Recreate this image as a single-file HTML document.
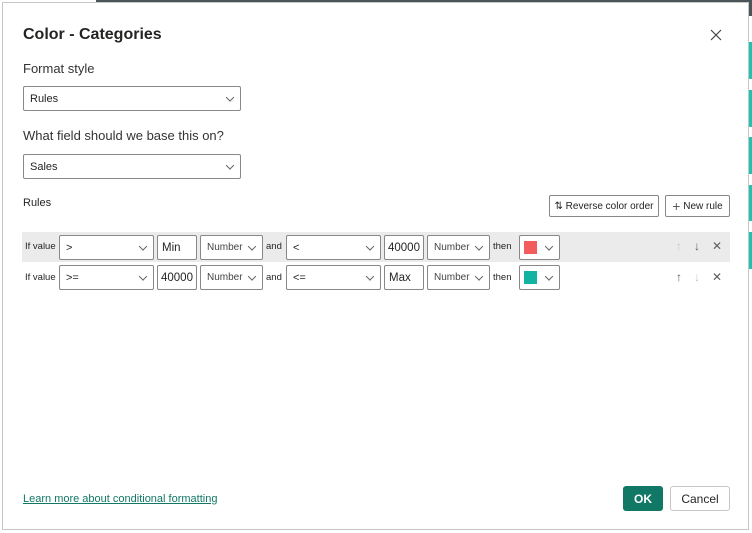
<!DOCTYPE html>
<html><head><style>
*{box-sizing:border-box;margin:0;padding:0}
body{width:752px;height:533px;background:#fff;position:relative;overflow:hidden;font-family:"Liberation Sans",sans-serif;color:#252423}
.a{position:absolute}
.dlg{left:2px;top:2px;width:747px;height:528px;border:1px solid #c8c6c4;background:#fff}
.bx{position:absolute;border:1px solid #8a8886;background:#fff;border-radius:2px;font-size:11px;color:#252423;padding-left:6px;display:flex;align-items:center}
.ch{position:absolute;right:7px;top:50%;width:6px;height:6px;border-right:1px solid #666;border-bottom:1px solid #666;transform:translateY(-75%) rotate(45deg)}
.lbl{position:absolute;font-size:9.5px;color:#252423}
.btn{position:absolute;border:1px solid #8a8886;border-radius:2px;font-size:10px;display:flex;align-items:center;justify-content:center;background:#fff}
.sw{width:13px;height:13px}
.ic{position:absolute;font-size:12px;color:#605e5c}
</style></head><body>
<div class="a" style="left:96px;top:0;width:656px;height:2px;background:#4a5558"></div>
<div class="a" style="left:748px;top:0;width:4px;height:16px;background:#4a5558"></div>
<div class="a" style="left:749px;top:42px;width:3px;height:37px;background:#1fc3b0"></div>
<div class="a" style="left:749px;top:90px;width:3px;height:37px;background:#1fc3b0"></div>
<div class="a" style="left:749px;top:137px;width:3px;height:37px;background:#1fc3b0"></div>
<div class="a" style="left:749px;top:185px;width:3px;height:36px;background:#1fc3b0"></div>
<div class="a" style="left:749px;top:232px;width:3px;height:37px;background:#1fc3b0"></div>
<div class="a dlg"></div>
<div class="a" style="left:23px;top:26px;font-size:16px;font-weight:bold;color:#252423">Color - Categories</div>
<svg class="a" style="left:710px;top:29px" width="12" height="12"><path d="M1 1L11 11M11 1L1 11" stroke="#444" stroke-width="1.2"/></svg>
<div class="a" style="left:23px;top:61px;font-size:13px;color:#333">Format style</div>
<div class="bx" style="left:23px;top:86px;width:218px;height:25px">Rules<span class="ch"></span></div>
<div class="a" style="left:23px;top:128px;font-size:13px;color:#333">What field should we base this on?</div>
<div class="bx" style="left:23px;top:154px;width:218px;height:25px">Sales<span class="ch"></span></div>
<div class="a" style="left:23px;top:197px;font-size:11px">Rules</div>
<div class="btn" style="left:549px;top:195px;width:110px;height:22px">⇅&nbsp;Reverse color order</div>
<div class="btn" style="left:665px;top:195px;width:65px;height:22px"><span style="font-size:14px;color:#605e5c">+</span>&nbsp;New rule</div>

<div class="a" style="left:22px;top:232px;width:708px;height:30px;background:#ebebeb"></div>
<div class="lbl" style="left:25px;top:241px">If value</div>
<div class="bx" style="left:59px;top:235px;width:95px;height:25px">&gt;<span class="ch"></span></div>
<div class="bx" style="left:157px;top:235px;width:40px;height:25px;font-size:11.5px;padding-left:4px">Min</div>
<div class="bx" style="left:200px;top:235px;width:63px;height:25px;font-size:10px;color:#444">Number<span class="ch"></span></div>
<div class="lbl" style="left:266px;top:241px">and</div>
<div class="bx" style="left:286px;top:235px;width:95px;height:25px">&lt;<span class="ch"></span></div>
<div class="bx" style="left:384px;top:235px;width:40px;height:25px;font-size:11.5px;padding-left:3px">40000</div>
<div class="bx" style="left:427px;top:235px;width:63px;height:25px;font-size:10px;color:#444">Number<span class="ch"></span></div>
<div class="lbl" style="left:493px;top:241px">then</div>
<div class="bx" style="left:519px;top:235px;width:41px;height:25px;padding-left:4px"><div class="sw" style="background:#f25c5c"></div><span class="ch"></span></div>
<div class="ic" style="left:676px;top:239px;color:#c8c6c4">↑</div>
<div class="ic" style="left:694px;top:239px">↓</div>
<div class="ic" style="left:712px;top:239px">✕</div>

<div class="lbl" style="left:25px;top:272px">If value</div>
<div class="bx" style="left:59px;top:265px;width:95px;height:25px">&gt;=<span class="ch"></span></div>
<div class="bx" style="left:157px;top:265px;width:40px;height:25px;font-size:11.5px;padding-left:3px">40000</div>
<div class="bx" style="left:200px;top:265px;width:63px;height:25px;font-size:10px;color:#444">Number<span class="ch"></span></div>
<div class="lbl" style="left:266px;top:272px">and</div>
<div class="bx" style="left:286px;top:265px;width:95px;height:25px">&lt;=<span class="ch"></span></div>
<div class="bx" style="left:384px;top:265px;width:40px;height:25px;font-size:11.5px;padding-left:4px">Max</div>
<div class="bx" style="left:427px;top:265px;width:63px;height:25px;font-size:10px;color:#444">Number<span class="ch"></span></div>
<div class="lbl" style="left:493px;top:272px">then</div>
<div class="bx" style="left:519px;top:265px;width:41px;height:25px;padding-left:4px"><div class="sw" style="background:#12b3a0"></div><span class="ch"></span></div>
<div class="ic" style="left:676px;top:270px">↑</div>
<div class="ic" style="left:694px;top:270px;color:#c8c6c4">↓</div>
<div class="ic" style="left:712px;top:270px">✕</div>

<div class="a" style="left:23px;top:493px;font-size:11px;color:#117865;text-decoration:underline">Learn more about conditional formatting</div>
<div class="a" style="left:623px;top:486px;width:40px;height:25px;background:#117865;border-radius:3px;color:#fff;font-size:12px;font-weight:bold;display:flex;align-items:center;justify-content:center">OK</div>
<div class="a" style="left:670px;top:486px;width:60px;height:25px;border:1px solid #c8c6c4;border-radius:3px;font-size:12px;display:flex;align-items:center;justify-content:center">Cancel</div>
</body></html>
